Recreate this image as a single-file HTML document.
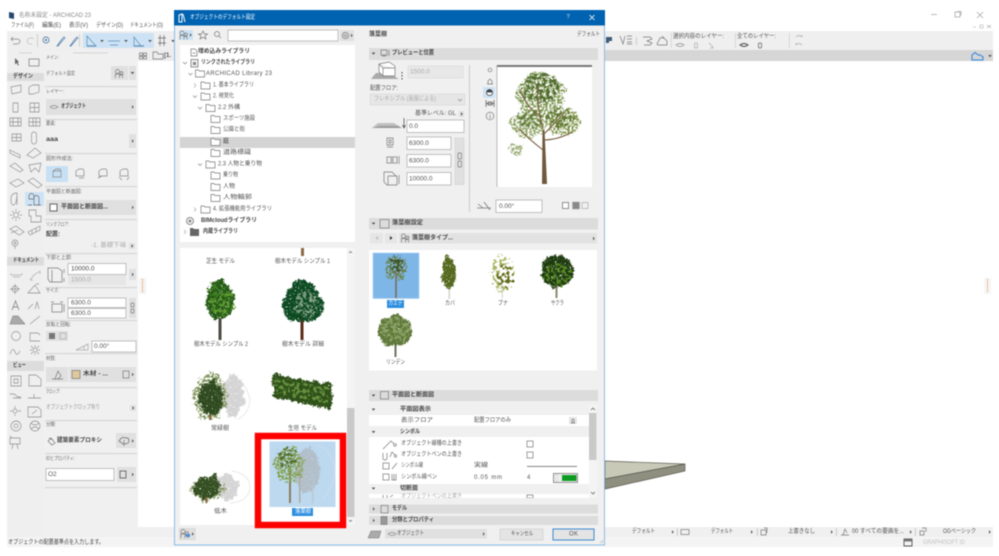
<!DOCTYPE html>
<html lang="ja"><head><meta charset="utf-8"><title>ARCHICAD 23</title>
<style>
html,body{margin:0;padding:0;background:#fff;width:999px;height:556px;overflow:hidden}
svg{display:block;filter:blur(.5px)}
text{font-family:"Liberation Sans","Noto Sans CJK JP",sans-serif;font-size:6px;fill:#555;dominant-baseline:central}
.b{font-weight:700;fill:#444}.g{fill:#aaa}.s{font-size:5px;fill:#666}.w{fill:#fff}
.l{fill:none;stroke:#777;stroke-width:.7}.lg{fill:none;stroke:#aaa;stroke-width:.7}
.i{fill:#fff;stroke:#a8a8a8;stroke-width:.7}.bar{fill:#dcdcdc}.cb{fill:#e0e0e0}.sep{fill:#d6d6d6}
</style></head><body>
<svg xmlns="http://www.w3.org/2000/svg" width="999" height="556" viewBox="0 0 999 556">
<defs>
<filter id="a" x="-30%" y="-30%" width="160%" height="160%" color-interpolation-filters="sRGB"><feTurbulence type="fractalNoise" baseFrequency=".14" numOctaves="2" seed="21" result="n0"/><feDisplacementMap in="SourceGraphic" in2="n0" scale="11" xChannelSelector="R" yChannelSelector="G" result="d0"/><feTurbulence type="fractalNoise" baseFrequency=".5" numOctaves="2" seed="4" result="n"/><feDisplacementMap in="d0" in2="n" scale="5" xChannelSelector="R" yChannelSelector="G" result="d"/><feColorMatrix in="n" type="matrix" values="0 0 0 0 0 0 0 0 0 0 0 0 0 0 0 0 0 0 9 -3.9" result="m"/><feComposite in="d" in2="m" operator="in"/></filter>
<filter id="c" x="-30%" y="-30%" width="160%" height="160%" color-interpolation-filters="sRGB"><feTurbulence type="fractalNoise" baseFrequency=".16" numOctaves="2" seed="7" result="n0"/><feDisplacementMap in="SourceGraphic" in2="n0" scale="8" xChannelSelector="R" yChannelSelector="G" result="d0"/><feTurbulence type="fractalNoise" baseFrequency=".6" numOctaves="2" seed="9" result="n"/><feDisplacementMap in="d0" in2="n" scale="4" xChannelSelector="R" yChannelSelector="G" result="d"/><feColorMatrix in="n" type="matrix" values="0 0 0 0 0 0 0 0 0 0 0 0 0 0 0 0 0 0 9 -2.2" result="m"/><feComposite in="d" in2="m" operator="in"/></filter>
<filter id="e" x="-30%" y="-30%" width="160%" height="160%" color-interpolation-filters="sRGB"><feTurbulence type="fractalNoise" baseFrequency=".3" numOctaves="2" seed="15" result="n"/><feDisplacementMap in="SourceGraphic" in2="n" scale="9" xChannelSelector="R" yChannelSelector="G" result="d"/><feColorMatrix in="n" type="matrix" values="0 0 0 0 0 0 0 0 0 0 0 0 0 0 0 0 0 0 10 -4.8" result="m"/><feComposite in="d" in2="m" operator="in"/></filter>
<path id="ar" d="M0-1.8L1.8 0 0 1.8z" fill="#555"/>
<path id="dn" d="M-1.8-1H1.8L0 1.2z" fill="#555"/>
<path id="cd" d="M-2-1L0 1 2-1" fill="none" stroke="#888" stroke-width=".7"/>
<path id="cr" d="M-1-2L1 0-1 2" fill="none" stroke="#aaa" stroke-width=".7"/>
<path id="fo" d="M.5 1H3.5L4.5 2H9.5V8H.5z" fill="#fff" stroke="#777" stroke-width=".7"/>
<path id="ey" d="M-4 0Q0-3 4 0 0 3-4 0z" fill="none" stroke="#888" stroke-width=".7"/>
<g id="tr" fill="none" stroke="#777" stroke-width=".7"><circle cx="-2" cy="-2.5" r="2"/><path d="M-4 4V0H0V4M0 1H3V4"/><circle cx="2" cy="-1" r="1.4"/></g>
</defs>

<!-- title + menu -->
<path d="M9 18V12L14 13V19z" fill="#27476f"/>
<text x="19" y="16" textLength="72" lengthAdjust="spacingAndGlyphs" style="fill:#888">名称未設定 - ARCHICAD 23</text>
<text x="11" y="26" textLength="23" lengthAdjust="spacingAndGlyphs">ファイル(F)</text>
<text x="42" y="26" textLength="19" lengthAdjust="spacingAndGlyphs">編集(E)</text>
<text x="69" y="26" textLength="19" lengthAdjust="spacingAndGlyphs">表示(V)</text>
<text x="96" y="26" textLength="27" lengthAdjust="spacingAndGlyphs">デザイン(D)</text>
<text x="130" y="26" textLength="33" lengthAdjust="spacingAndGlyphs">ドキュメント(O)</text>

<!-- window controls -->
<g fill="none" stroke="#aaa" stroke-width=".8"><path d="M931 14.5H937"/><rect x="955" y="12" width="5" height="5"/><path d="M957 11.5H961V15.5"/><path d="M977 12L983 18M983 12L977 18"/><path d="M973 27H976M980 25H983V28H980zM987 25L991 28M991 25L987 28" stroke-width=".6"/></g>

<!-- toolbar -->
<rect x="7" y="31" width="986" height="19" fill="#efefef"/>
<rect x="83" y="33" width="71" height="15" fill="#cde3f5"/>
<g fill="none" stroke="#888" stroke-width=".7">
<path d="M11 39H16Q20 39 20 41.500 20 44 16 44H13M11 39L13 37M11 39L13 41"/>
<path d="M34 39Q31 37 28 39 26 42 29 44H32" stroke="#c0c0c0"/>
<path d="M37.500 34V47" stroke="#c4c4c4"/>
<circle cx="46" cy="40" r="3" stroke="#39679a"/><circle cx="46" cy="40" r="1" fill="#39679a" stroke="none"/>
<path d="M57 46L62 39 64 37 65 38 63 40 58 46z" stroke="#4a7aa8"/><path d="M70 46L75 39 77 37 78 38 76 40 71 46z" stroke="#4a7aa8"/>
<path d="M79.500 34V47" stroke="#c4c4c4"/>
<path d="M87 46V36L96 46z" stroke="#5c8cb0"/><path d="M87 46H96" stroke="#5c8cb0" stroke-width="1.200"/>
<path d="M108 41H120M110 45H118" stroke="#5c8cb0"/>
<path d="M134 46V37L141 46z" stroke="#5c8cb0"/><path d="M134 46H144" stroke="#5c8cb0" stroke-width="1.200"/>
<path d="M158 38H166M158 43H166M160 35V46M164 35V46" stroke="#666"/>
</g>
<use href="#dn" x="102" y="41"/><use href="#dn" x="126" y="41"/><use href="#dn" x="150" y="41"/><use href="#dn" x="173" y="41"/>
<!-- right toolbar -->
<path d="M606 37H612V41H609V43H606z" fill="#3c5c78"/>
<path d="M620 36L623 44 625 36M627 36H632M627 39H632M627 42H632M627 44H632" class="l"/>
<rect x="636" y="37" width=".7" height="8" fill="#bbb"/>
<path d="M643 37H650L652 39 647 41 652 43 650 45H644" class="l"/>
<path d="M657 44L660 38H664L667 41V45H658zM662 36L664 38" class="l"/>
<rect x="671" y="33" width=".7" height="15" fill="#ccc"/>
<text x="673" y="37" textLength="51" lengthAdjust="spacingAndGlyphs">選択内容のレイヤー:</text>
<use href="#ey" x="680" y="45"/>
<g class="lg"><rect x="694.500" y="43" width="3" height="5" rx="1"/><path d="M709 43L713 47V48H710"/></g>
<rect x="735" y="33" width=".7" height="15" fill="#ccc"/>
<text x="737" y="37" textLength="39" lengthAdjust="spacingAndGlyphs">全てのレイヤー:</text>
<path d="M740 45Q744 42 748 45 744 48 740 45z" fill="none" stroke="#444" stroke-width="1"/>
<rect x="758.500" y="43" width="3" height="5" rx="1" fill="none" stroke="#666" stroke-width=".8"/>
<rect x="789" y="33" width=".7" height="15" fill="#ccc"/>
<path d="M796 37Q799 34 802 37M802 37V35M796 45Q799 42 802 45M796 45V43" class="lg"/>

<!-- tab bar -->
<rect x="138" y="50" width="855" height="11" fill="#d6d6d6"/>
<rect x="138" y="50" width="36" height="11" fill="#ededed"/>
<g class="l"><rect x="139.500" y="53" width="3" height="2.500"/><rect x="143.500" y="53" width="3" height="2.500"/><rect x="139.500" y="56.500" width="3" height="2.500"/><rect x="143.500" y="56.500" width="3" height="2.500"/><path d="M153 59V52H157L158 54H163V59z"/></g>
<text x="164" y="56" style="font-weight:700">[1.</text>
<path d="M972 59V55L975 52.500 978 55H980L983 57V60H972z" fill="none" stroke="#4a90d9" stroke-width="1.200"/>
<use href="#dn" x="990" y="56"/>

<!-- tool column & info box backgrounds -->
<rect x="7" y="50" width="37" height="487" fill="#efefef"/>
<rect x="44" y="50" width="94" height="487" fill="#f0f0f0"/>
<rect x="7" y="50" width="131" height="2" fill="#efefef"/>
<rect x="19" y="52.500" width="13" height=".8" fill="#ccc"/><rect x="73" y="52.500" width="35" height=".8" fill="#ccc"/>
<!-- canvas slab -->
<path d="M605 461L685 464 605 479z" fill="#c9c9b8" stroke="#5a5a50" stroke-width=".7"/>
<path d="M605 479L685 464V471L605 489z" fill="#8f8f80" stroke="#5a5a50" stroke-width=".7"/>
<!-- orange handles -->
<rect x="139" y="278" width="7" height="16" fill="#f3f3f3"/><path d="M142.500 279V293" stroke="#e98f45" stroke-width="1" stroke-dasharray="1 1"/>
<rect x="984" y="278" width="7" height="16" fill="#f6f6f6"/><path d="M987.500 279V293" stroke="#e98f45" stroke-width="1" stroke-dasharray="1 1"/>

<!-- tools -->
<rect x="7" y="73" width="37" height="8" fill="#dcdcdc"/><text x="13" y="77" textLength="20" lengthAdjust="spacingAndGlyphs" class="b">デザイン</text>
<rect x="7" y="257" width="37" height="8.500" fill="#dcdcdc"/><text x="13" y="261" textLength="26" lengthAdjust="spacingAndGlyphs" class="b">ドキュメント</text>
<rect x="7" y="361" width="37" height="10" fill="#dcdcdc"/><text x="13" y="366" textLength="13" lengthAdjust="spacingAndGlyphs" class="b">ビュー</text>
<rect x="25" y="192" width="19" height="14" fill="#cde3f5"/>
<path d="M15 58L19 62 17.500 62.500 19 65 18 65.500 16.500 63 15 64.500z" fill="#666"/>
<rect x="29" y="59" width="10" height="7" class="l"/>
<g fill="none" stroke="#8c8c8c" stroke-width=".65">
<path d="M11 87L21 85V92L12 94z M29 87L33 85H39V92L33 94H29z"/>
<path d="M13 103H18V112H13zM30 103H39V112H30zM30 107.500H39M34.500 103V112"/>
<path d="M10 118H21V126H10zM10 122H21M13 118V126M18 118V126M29 118H40V126H29zM33 118V126M36 118V126M29 122H40"/>
<path d="M12 134H21V141H12zM12 137.500H21M16.500 134V141"/><rect x="31.500" y="132" width="5" height="12" rx="2.500"/>
<path d="M10 150L20 155 20 158 10 153zM27 155L35 148 41 153 33 158z"/>
<path d="M10 166L15 163 23 170 20 172zM29 165L41 163 39 172 35 168 31 172z"/>
<path d="M10 183L18 179 24 183 16 187zM28 181L33 178 42 185 38 188z"/>
<path d="M11 199Q11 193 17 193 17 205 13 205 11 205 11 199zM17 193V205"/>
<path d="M29 196A2 2 0 1 1 34 196V199H29zM34 198A2 2 0 1 1 39 198V205H34V199M28 205H32M37 205H41" stroke="#666"/>
<circle cx="16" cy="215" r="2.500"/><path d="M16 209V211M16 219V221M10 215H12M20 215H22M12 211L13.500 212.500M20 211L18.500 212.500M12 219L13.500 217.500M20 219L18.500 217.500"/>
<path d="M29 210H36V216H41V222H31V216H29z"/>
<path d="M10 229L16 226 24 232 19 235zM11 233L18 230"/><path d="M28 232L40 226V230L30 235zM32 230V234M36 228V232"/>
<circle cx="15" cy="243" r="3"/><circle cx="15" cy="243" r="1"/><path d="M15 246V249"/>
<path d="M11 275H22M11 275V273M22 275V273M13 277H20" stroke="#aaa"/><path d="M30 280L34 275 40 271M30 280H33M40 271V274" stroke="#aaa"/>
<circle cx="15" cy="289" r="3"/><path d="M15 284V294M10 289H20"/><path d="M28 293L35 285 40 293zM36 284H39"/>
<path d="M12 310L15.500 301 19 310M13 307H18" stroke-width=".9"/><path d="M28 309L33 304M35 309L37 302 39 309"/>
<path d="M10 324L13 316H18L25 324z" fill="#aaa"/><path d="M30 324L40 316"/>
<circle cx="16" cy="336" r="4.500"/><path d="M30 341V333H38L40 335M30 341H40"/>
<path d="M10 354Q13 346 15 352 17 357 20 351"/><circle cx="35" cy="350" r="2"/><path d="M35 345V347M35 353V355M30 350H32M38 350H40M31 346L33 348M39 346L37 348M31 354L33 352M39 354L37 352"/>
<path d="M11 376H21V386H11zM14 379H18V383H14z"/><path d="M29 375H36L41 379V386H29z"/>
<path d="M10 394H14L18 397 21 397M13 398H21" /><path d="M28 398H41M34 394V398"/>
<circle cx="15" cy="411" r="2"/><path d="M15 406V408M15 414V416M10 411H12M18 411H21M28 417V407H38L41 410V417zM32 414L37 410" />
<circle cx="16" cy="426" r="5"/><circle cx="16" cy="426" r="2"/><circle cx="35" cy="426" r="5"/><path d="M31 423Q35 427 39 423M31 429Q35 425 39 429"/>
<path d="M10 438H20V444H10zM13 444L12 449M17 444L18 449M10 436L12 438"/>
</g>

<!-- info box separators -->
<g class="sep"><rect x="45" y="86" width="92" height="1.200"/><rect x="45" y="119" width="92" height="1.200"/><rect x="45" y="153" width="92" height="1.200"/><rect x="45" y="186" width="92" height="1.200"/><rect x="45" y="219" width="92" height="1.200"/><rect x="45" y="253" width="92" height="1.200"/><rect x="45" y="287" width="92" height="1.200"/><rect x="45" y="320" width="92" height="1.200"/><rect x="45" y="353" width="92" height="1.200"/><rect x="45" y="387" width="92" height="1.200"/><rect x="45" y="420" width="92" height="1.200"/><rect x="45" y="453" width="92" height="1.200"/><rect x="45" y="487" width="92" height="1.200"/></g>
<text class="s" x="46" y="58" textLength="13" lengthAdjust="spacingAndGlyphs">メイン:</text>
<text class="s" x="46" y="74" textLength="29" lengthAdjust="spacingAndGlyphs">デフォルト設定</text>
<rect class="cb" x="111" y="66" width="17" height="14"/><rect class="cb" x="129" y="66" width="7" height="14"/><use href="#tr" x="119.500" y="74"/><use href="#dn" x="132.500" y="73"/>
<text class="s" x="46" y="92" textLength="18" lengthAdjust="spacingAndGlyphs">レイヤー:</text>
<rect class="cb" x="46" y="99" width="90" height="16"/><use href="#ey" x="54" y="107"/><text x="61" y="107" textLength="25" lengthAdjust="spacingAndGlyphs" class="b">オブジェクト</text><use href="#ar" x="132" y="107"/>
<text class="s" x="46" y="124" textLength="10" lengthAdjust="spacingAndGlyphs">要素:</text>
<text x="46" y="140" textLength="12" lengthAdjust="spacingAndGlyphs" class="b">aaa</text>
<rect class="cb" x="129" y="134" width="7" height="14"/><use href="#ar" x="132" y="141"/>
<text class="s" x="46" y="159" textLength="27" lengthAdjust="spacingAndGlyphs">図形作成法:</text>
<rect x="46" y="166" width="22" height="16" fill="#c8e0f4"/>
<g fill="none" stroke="#888" stroke-width=".7"><path d="M53 171L56 169H60L61 171V177H53zM53 171H61"/><path d="M76 171L79 169H83L84 171V176H76zM84 178L79 178"/><path d="M99 171L102 169H106L107 171V176H99zM98 178L102 176"/><path d="M120 171L123 169H127L128 171V176H120zM119 177L122 180M129 177L127 180"/></g>
<text class="s" x="46" y="192" textLength="36" lengthAdjust="spacingAndGlyphs">平面図と断面図:</text>
<rect class="cb" x="46" y="200" width="90" height="15"/><rect x="50" y="204" width="7" height="7" style="stroke:#555;stroke-width:.9;fill:#fff"/><text x="61" y="207.500" textLength="47" lengthAdjust="spacingAndGlyphs" class="b">平面図と断面図...</text><use href="#ar" x="132" y="207.500"/>
<text class="s" x="46" y="225" textLength="23" lengthAdjust="spacingAndGlyphs">リンクフロア:</text>
<text x="46" y="235" textLength="14" lengthAdjust="spacingAndGlyphs" class="b">配置:</text>
<text class="g" x="91" y="246" textLength="35" lengthAdjust="spacingAndGlyphs">-1. 基礎下端</text><rect class="cb" x="129" y="243" width="6" height="6"/><use href="#ar" x="131.500" y="246"/>
<text class="s" x="46" y="258" textLength="26" lengthAdjust="spacingAndGlyphs">下部と上部:</text>
<path d="M48 272V268H58L62 271V282H50L48 279zM52 270V282M64 269V273M64 278V282" class="l"/>
<rect class="i" x="68" y="263.500" width="58" height="11"/><text x="71" y="269" style="fill:#444;font-size:6.500px">10000.0</text>
<rect x="68" y="275" width="58" height="10" fill="#e6e6e6"/><text x="71" y="280" class="g" style="font-size:6.500px">1500.0</text>
<rect class="cb" x="129" y="269" width="7" height="11"/><use href="#ar" x="132" y="274.500"/>
<text class="s" x="46" y="291" textLength="13" lengthAdjust="spacingAndGlyphs">サイズ:</text>
<g class="l"><rect x="52" y="304" width="10" height="8"/><path d="M51 302H54M60 302H63M64 304V312"/></g>
<rect class="i" x="68" y="298" width="58" height="9.500"/><text x="71" y="303" style="font-size:6.500px">6300.0</text>
<rect class="i" x="68" y="308.500" width="58" height="9.500"/><text x="71" y="313.500" style="font-size:6.500px">6300.0</text>
<rect class="cb" x="129" y="298" width="7" height="20"/><rect x="131" y="303" width="3" height="4" rx="1" class="l"/><rect x="131" y="309" width="3" height="4" rx="1" class="l"/>
<text class="s" x="46" y="325" textLength="25" lengthAdjust="spacingAndGlyphs">反転と回転:</text>
<rect class="cb" x="46" y="331" width="22" height="10"/><rect x="49" y="333" width="6" height="6" fill="#777"/><rect x="60" y="333" width="6" height="6" class="lg"/>
<path d="M76 350L88 344V350zM84 346V350" class="lg"/>
<rect class="i" x="92" y="341" width="44" height="11"/><text x="94" y="346.500" style="font-size:6.500px">0.00°</text>
<text class="s" x="46" y="359" textLength="10" lengthAdjust="spacingAndGlyphs">材質:</text>
<rect class="cb" x="46" y="367" width="22" height="15"/><rect class="cb" x="69" y="367" width="67" height="15"/>
<path d="M52 379H63M55 379L58 371 61 376 58 379" class="l"/><rect x="72" y="370.500" width="8" height="8" fill="#dfc99a" stroke="#777" stroke-width=".7"/><text x="83" y="374.500" textLength="25" lengthAdjust="spacingAndGlyphs" class="b">木材 - ...</text><rect x="123" y="371" width="6" height="7" class="l"/><use href="#ar" x="132" y="374.500"/>
<text class="s" x="46" y="392" textLength="14" lengthAdjust="spacingAndGlyphs">クロップ:</text>
<text x="46" y="408" textLength="54" lengthAdjust="spacingAndGlyphs" style="fill:#999">オブジェクトクロップ有り</text><rect class="cb" x="130" y="405" width="6" height="6"/><use href="#ar" x="132.500" y="408"/>
<text class="s" x="46" y="425" textLength="10" lengthAdjust="spacingAndGlyphs">分類:</text>
<path d="M48 441L51 438 55 443 52 445zM49 438L53 440" class="l"/><text x="57" y="441" textLength="45" lengthAdjust="spacingAndGlyphs" class="b">建築要素プロキシ</text>
<rect class="cb" x="116" y="433" width="20" height="15"/><path d="M119 441Q122 436 125 438 129 437 129 441 129 444 123 444z" fill="none" stroke="#777" stroke-width=".8"/><path d="M124 440V446" stroke="#777" stroke-width=".7"/><use href="#ar" x="132" y="441"/>
<text class="s" x="46" y="459" textLength="29" lengthAdjust="spacingAndGlyphs">IDとプロパティ:</text>
<rect class="i" x="46" y="468.500" width="68" height="12"/><text x="48" y="474.500" style="font-size:6.500px">O2</text>
<rect class="cb" x="117" y="467" width="19" height="15"/><rect x="120" y="471" width="6" height="7" fill="none" stroke="#555" stroke-width=".8"/><use href="#ar" x="132" y="474.500"/>
<!-- zoom buttons -->
<g class="lg"><circle cx="143" cy="531" r="3"/><circle cx="155" cy="531" r="3"/></g><circle cx="167" cy="531" r="3" fill="none" stroke="#777"/><path d="M169 533L171 536M145 533L147 536M157 533L159 536" stroke="#aaa"/>

<!-- bottom bars -->
<rect x="138" y="527" width="855" height="10" fill="#f0f0f0"/>
<rect x="7" y="537" width="986" height="10" fill="#f4f4f4"/>
<text x="8" y="543" textLength="96" lengthAdjust="spacingAndGlyphs" style="fill:#444">オブジェクトの配置基準点を入力します。</text>
<text x="632" y="532" textLength="23" lengthAdjust="spacingAndGlyphs">デフォルト</text><use href="#ar" x="672" y="532"/><rect x="677" y="528" width=".7" height="8" fill="#bbb"/>
<rect x="681" y="529.500" width="8" height="5" class="l"/>
<text x="711" y="532" textLength="22" lengthAdjust="spacingAndGlyphs">デフォルト</text><use href="#ar" x="751" y="532"/><rect x="757" y="528" width=".7" height="8" fill="#bbb"/>
<path d="M761 530H766V535H761zM764 528H767V533" class="l"/>
<text x="788" y="532" textLength="27" lengthAdjust="spacingAndGlyphs">上書きなし</text><use href="#ar" x="831" y="532"/><rect x="836" y="528" width=".7" height="8" fill="#bbb"/>
<path d="M841 535H849M843 535L845 529 847 533" class="l"/>
<text x="852" y="532" textLength="52" lengthAdjust="spacingAndGlyphs">00 すべての要画を...</text><use href="#ar" x="910" y="532"/><rect x="915" y="528" width=".7" height="8" fill="#bbb"/>
<path d="M920 531H924V535H920zM922 528H926V532" class="l"/>
<text x="943" y="532" textLength="33" lengthAdjust="spacingAndGlyphs">OGベーシック</text><use href="#ar" x="989" y="532"/>
<path d="M904 539H912V546H904z" fill="none" stroke="#555" stroke-width=".9"/><rect x="904" y="539" width="8" height="2.500" fill="#777"/>
<text x="923" y="543" textLength="42" lengthAdjust="spacingAndGlyphs" style="fill:#c0c0c0">GRAPHISOFT ID</text>

<!-- DIALOG -->
<rect x="174.500" y="10.500" width="430" height="534.500" fill="#f0f0f0" stroke="#8cbbe6"/>
<rect x="174" y="10" width="431" height="15.500" fill="#0063b1"/>
<path d="M179 22V15L182 14V22zM183 14L185 22" stroke="#fff" stroke-width="1" fill="none"/>
<text x="190" y="18" textLength="65" lengthAdjust="spacingAndGlyphs" class="w">オブジェクトのデフォルト設定</text>
<text x="566.500" y="17.500" style="fill:#cfe0f0">?</text>
<path d="M589.500 15L594.500 20M594.500 15L589.500 20" stroke="#fff" stroke-width=".8"/>

<!-- left pane toolbar -->
<rect x="179" y="30" width="14" height="10" fill="#cde3f5"/><use href="#tr" x="184" y="35.500"/><use href="#ar" x="190" y="35"/>
<path d="M203 31L204.500 34H207.500L205 36 206 39 203 37.200 200 39 201 36 198.500 34H201.500z" class="l"/>
<circle cx="217" cy="34" r="2.500" class="l"/><path d="M219 36L221 38" class="l"/>
<rect class="i" x="228" y="30" width="110" height="11"/>
<rect class="cb" x="340" y="30" width="14" height="11"/><circle cx="345.500" cy="35.500" r="3" fill="none" stroke="#777" stroke-width="1.200" stroke-dasharray="1.200 .6"/><circle cx="345.500" cy="35.500" r="1" fill="none" stroke="#777" stroke-width=".6"/><use href="#ar" x="351" y="35.500"/>

<!-- tree pane -->
<rect x="180" y="45" width="175" height="197" fill="#fff"/>
<rect x="180" y="137" width="175" height="11" fill="#d4d4d4"/>
<path d="M191 49H195L197 51V56H191zM192.500 53H195.500" class="l"/>
<text x="198" y="52" textLength="52" lengthAdjust="spacingAndGlyphs" class="b">埋め込みライブラリ</text>
<use href="#cd" x="185" y="63"/><rect x="191" y="59.500" width="7" height="7.500" fill="#f2f2f2" stroke="#666" stroke-width=".7"/><rect x="193" y="62" width="3" height="3" fill="#888"/>
<text x="201" y="63" textLength="54" lengthAdjust="spacingAndGlyphs" class="b">リンクされたライブラリ</text>
<use href="#cd" x="190.500" y="74"/><use href="#fo" x="195" y="69"/>
<text x="206" y="74" textLength="66">ARCHICAD Library 23</text>
<use href="#cr" x="195" y="85.500"/><use href="#fo" x="200.500" y="81"/>
<text x="213" y="85.500" textLength="41" lengthAdjust="spacingAndGlyphs">1. 基本ライブラリ</text>
<use href="#cd" x="195" y="96.500"/><use href="#fo" x="200.500" y="92"/>
<text x="213" y="96.500" textLength="21" lengthAdjust="spacingAndGlyphs">2. 視覚化</text>
<use href="#cd" x="200" y="108"/><use href="#fo" x="205.500" y="103.500"/>
<text x="218" y="108" textLength="22" lengthAdjust="spacingAndGlyphs">2.2 外構</text>
<use href="#fo" x="210.500" y="114.500"/><text x="223" y="119" textLength="32" lengthAdjust="spacingAndGlyphs">スポーツ施設</text>
<use href="#fo" x="210.500" y="125.500"/><text x="223" y="130" textLength="22" lengthAdjust="spacingAndGlyphs">公園と街</text>
<use href="#fo" x="210.500" y="137.500"/><text x="223" y="142" textLength="6" lengthAdjust="spacingAndGlyphs" style="fill:#333">庭</text>
<use href="#fo" x="210.500" y="148.500"/><text x="223" y="153" textLength="28" lengthAdjust="spacingAndGlyphs">道路標識</text>
<use href="#cd" x="200" y="164.500"/><use href="#fo" x="205.500" y="160"/>
<text x="218" y="164.500" textLength="44" lengthAdjust="spacingAndGlyphs">2.3 人物と乗り物</text>
<use href="#fo" x="210.500" y="171"/><text x="223" y="175.500" textLength="15" lengthAdjust="spacingAndGlyphs">乗り物</text>
<use href="#fo" x="210.500" y="182.500"/><text x="223" y="187" textLength="12" lengthAdjust="spacingAndGlyphs">人物</text>
<use href="#fo" x="210.500" y="193.500"/><text x="223" y="198" textLength="29" lengthAdjust="spacingAndGlyphs">人物輪郭</text>
<use href="#cr" x="195" y="209.500"/><use href="#fo" x="200.500" y="205"/>
<text x="213" y="209.500" textLength="59" lengthAdjust="spacingAndGlyphs">4. 拡張機能用ライブラリ</text>
<circle cx="190" cy="221" r="3.500" fill="#eee" stroke="#666" stroke-width=".7"/><circle cx="190" cy="221" r="1.300" fill="#777"/>
<text x="201" y="221" textLength="56" lengthAdjust="spacingAndGlyphs" class="b">BIMcloudライブラリ</text>
<use href="#cr" x="185" y="232"/><path d="M190 228H193L194 229H199V236H190z" fill="#666"/>
<text x="203" y="232" textLength="35" lengthAdjust="spacingAndGlyphs" class="b">内蔵ライブラリ</text>

<!-- thumbnails pane -->
<rect x="180" y="248" width="175" height="277" fill="#fff"/>
<rect x="347" y="248" width="8" height="277" fill="#f4f4f4"/><rect x="347" y="408" width="7.500" height="109" fill="#c9c9c9"/>
<path d="M349 253L350.500 251.500 352 253M349 520L350.500 521.500 352 520" fill="none" stroke="#666" stroke-width=".7"/>
<rect x="301" y="248" width="3" height="8" fill="#8b6a45"/>
<text x="206" y="262" textLength="29" lengthAdjust="spacingAndGlyphs">芝生 モデル</text>
<text x="275" y="262" textLength="55" lengthAdjust="spacingAndGlyphs">樹木モデル シンプル 1</text>
<!-- tree simple 2 -->
<rect x="218.500" y="318" width="3" height="22" fill="#4c4a42"/>
<g filter="url(#c)"><path d="M220 279Q230 282 233 296 237 312 226 318H213Q203 312 207 296 210 282 220 279z" fill="#245a14"/></g>
<g filter="url(#e)"><ellipse cx="222" cy="303" rx="13" ry="13" fill="#5f9d30"/><ellipse cx="215" cy="290" rx="8" ry="7" fill="#3f8024"/></g>
<text x="194" y="345" textLength="54" lengthAdjust="spacingAndGlyphs">樹木モデル シンプル 2</text>
<!-- tree detail -->
<rect x="300.500" y="315" width="3" height="25" fill="#5a2e18"/>
<g filter="url(#c)"><path d="M302 279Q316 284 322 300 327 314 312 321H291Q279 314 283 300 289 284 302 279z" fill="#0d4a22"/></g>
<g filter="url(#e)" opacity=".55"><ellipse cx="306" cy="304" rx="12" ry="13" fill="#cfd8c4"/></g>
<text x="282" y="345" textLength="42" lengthAdjust="spacingAndGlyphs">樹木モデル 詳細</text>
<!-- evergreen -->
<g filter="url(#c)" opacity=".5"><ellipse cx="233" cy="396" rx="11" ry="21" fill="#aaa"/></g>
<path d="M229 374Q246 380 250 400 248 415 238 419" fill="none" stroke="#d4d4d4" stroke-width="1" stroke-dasharray="1 1"/>
<g filter="url(#a)"><ellipse cx="210" cy="396" rx="17" ry="23" fill="#7a9054"/></g>
<g filter="url(#c)"><ellipse cx="211" cy="398" rx="12" ry="18" fill="#2f4a20"/></g>
<rect x="209" y="415" width="2.500" height="5" fill="#8b6a45"/>
<text x="211" y="429" textLength="18" lengthAdjust="spacingAndGlyphs">常緑樹</text>
<!-- hedge -->
<path d="M273 375L331 387 330 408 275 395z" fill="#38591f"/>
<g filter="url(#c)"><path d="M272 373L332 385 331 410 274 397z" fill="#2e5019"/></g>
<g filter="url(#e)"><path d="M274 377L329 388 329 405 276 393z" fill="#66903f"/></g>
<text x="288" y="429" textLength="29" lengthAdjust="spacingAndGlyphs">生垣 モデル</text>
<!-- shrub -->
<g filter="url(#c)" opacity=".5"><ellipse cx="227" cy="487" rx="12" ry="13" fill="#aaa"/></g>
<path d="M232 471Q250 474 250 488 248 502 230 503" fill="none" stroke="#d4d4d4" stroke-width="1" stroke-dasharray="1 1"/>
<g filter="url(#a)"><ellipse cx="206" cy="490" rx="16" ry="11" fill="#7a8f52"/></g>
<g filter="url(#c)"><path d="M194 484Q200 477 208 476L216 475Q220 484 219 494L206 500Q198 497 195 494z" fill="#344f22"/></g>
<rect x="205.500" y="497" width="2" height="6" fill="#8a6a46"/>
<text x="214" y="512" textLength="13" lengthAdjust="spacingAndGlyphs">低木</text>
<!-- red box -->
<rect x="258" y="436" width="85" height="89" fill="#fff" stroke="#ff0000" stroke-width="6.500"/>
<rect x="269.500" y="441.500" width="66" height="65.500" fill="#bcd9f0"/>
<g filter="url(#c)" opacity=".55"><ellipse cx="307" cy="470" rx="13" ry="22" fill="#aaa"/></g>
<path d="M316 445Q334 450 335 472 330 495 322 500" fill="none" stroke="#dde" stroke-width="1" stroke-dasharray="1 1"/>
<rect x="299" y="470" width="1.500" height="33" fill="#b0aca0"/><rect x="312" y="485" width="1.300" height="18" fill="#c4c4c4"/>
<rect x="289" y="470" width="2" height="33" fill="#8f7b60"/>
<g filter="url(#a)"><ellipse cx="289" cy="465" rx="15" ry="17" fill="#83a04a"/></g>
<g filter="url(#e)"><ellipse cx="287" cy="458" rx="11" ry="11" fill="#55702c"/></g>
<rect x="292" y="508" width="21" height="8" fill="#2d8fe0"/>
<text x="295" y="512" textLength="16" lengthAdjust="spacingAndGlyphs" class="w">落葉樹</text>
<rect x="179.500" y="528.500" width="15.500" height="11" fill="#e0e0e0" stroke="#ccc" stroke-width=".6"/><use href="#tr" x="185" y="534"/><rect x="186" y="534" width="4" height="3" fill="#4a90d9"/><use href="#ar" x="192" y="534"/>

<!-- right pane -->
<text x="369" y="35" textLength="18" lengthAdjust="spacingAndGlyphs" class="b">落葉樹</text>
<text x="577" y="35" textLength="23" lengthAdjust="spacingAndGlyphs">デフォルト</text>
<rect class="bar" x="369" y="48" width="229" height="12"/>
<use href="#dn" x="373.500" y="53.500"/><path d="M381 50H387V55H381zM382 56H386M389 50V56" class="l"/>
<text x="392" y="53.500" textLength="42" lengthAdjust="spacingAndGlyphs" class="b">プレビューと位置</text>
<path d="M371 79L376 73H388L399 79z" fill="#aaa"/><path d="M379 64L389 62 395 66V76H383L379 72zM379 64L383 68H395M383 68V76" fill="#fff" stroke="#777" stroke-width=".7"/><path d="M402 72V80" stroke="#444" stroke-dasharray="1.500 1.500"/>
<rect x="408" y="66" width="55" height="12" fill="#e8e8e8" stroke="#d8d8d8" stroke-width=".6"/><text x="410" y="72" class="g" style="font-size:6.500px">1500.0</text>
<text x="370" y="89" textLength="28" lengthAdjust="spacingAndGlyphs">配置フロア:</text>
<rect x="370" y="94" width="95" height="11" fill="#e6e6e6" stroke="#d8d8d8" stroke-width=".6"/><text x="374" y="99.500" textLength="62" lengthAdjust="spacingAndGlyphs" class="g">フレキシブル (高度による)</text><use href="#cd" x="460" y="100"/>
<text x="415" y="114" textLength="41" lengthAdjust="spacingAndGlyphs">基準レベル: GL</text><rect class="cb" x="459" y="111" width="5" height="6"/><use href="#ar" x="461" y="114"/>
<path d="M372 128L378 123H394L402 128z" fill="#c0c0c0"/><path d="M372 128L380 126H398L402 128z" fill="#999"/><path d="M404 118V127M402.500 125L404 128 405.500 125" stroke="#444" stroke-width=".7" fill="none"/>
<rect class="i" x="407" y="120" width="57" height="12.500"/><text x="409" y="126.500" style="font-size:6.500px">0.0</text>
<rect class="i" x="407" y="137" width="44" height="12.500"/><text x="409" y="143.500" style="font-size:6.500px">6300.0</text>
<rect class="i" x="407" y="154.500" width="44" height="12.500"/><text x="409" y="161" style="font-size:6.500px">6300.0</text>
<rect class="i" x="407" y="172.500" width="44" height="12.500"/><text x="409" y="179" style="font-size:6.500px">10000.0</text>
<rect class="cb" x="455" y="138" width="9" height="46.500" stroke="#ccc" stroke-width=".5"/><rect x="458" y="153" width="3.500" height="6" rx="1" class="l"/><rect x="458" y="161" width="3.500" height="6" rx="1" class="l"/>
<path d="M387 138H393V145H387zM389 140H391V143H389zM387 147H393" class="l"/>
<path d="M387 157H397V163H387zM399 156V164M391 158.500H393V161.500H391z" class="l"/>
<path d="M384 172H392L397 177V185H387L384 182zM388 176H397M388 176V185M399 175V184" class="l"/>
<rect x="469" y="65" width=".9" height="147" fill="#c8c8c8"/>
<!-- preview -->
<rect x="497" y="65" width="95" height="122" fill="#fff"/><rect x="497" y="65" width="95" height="2" fill="#777"/><rect x="496.500" y="65" width=".8" height="122" fill="#aaa"/>
<rect x="483" y="87" width="12" height="11" fill="#cde3f5"/>
<circle cx="490" cy="70" r="1.800" class="l"/>
<path d="M487 84H493M488 84V81L490 79 492 81V84" class="l"/>
<circle cx="489.500" cy="92.500" r="3" fill="#fff" stroke="#333" stroke-width=".7"/><path d="M486.500 92.500A3 3 0 0 1 492.500 92.500z" fill="#444"/>
<path d="M486 100V107M494 100V107M488 102H492V105H488zM486 103.500H494" stroke="#555" stroke-width=".7" fill="none"/>
<circle cx="490" cy="116" r="3.800" class="l"/><path d="M490 115V118.500M490 113.500V114" class="l"/>
<!-- big tree -->
<g filter="url(#a)"><ellipse cx="541" cy="95" rx="24" ry="22" fill="#7d9650"/><ellipse cx="528" cy="124" rx="19" ry="13" fill="#93a76a"/><ellipse cx="564" cy="122" rx="17" ry="13" fill="#84994f"/><ellipse cx="516" cy="149" rx="8" ry="5" fill="#9aac74"/></g>
<g filter="url(#e)"><ellipse cx="541" cy="88" rx="18" ry="15" fill="#4f6a30"/><ellipse cx="560" cy="118" rx="14" ry="10" fill="#5c7634"/><ellipse cx="530" cy="120" rx="13" ry="9" fill="#607a38"/></g>
<path d="M543 150Q530 140 518 128M543 135Q556 122 565 112M543 128Q536 105 538 85M541 118Q525 105 520 90M543 140Q558 140 572 132" fill="none" stroke="#7a5f40" stroke-width="1.100"/><path d="M542 184L547 184 544.500 130 542.500 130z" fill="#70583b"/>
<path d="M477 208H491M478 204L483 208M484 202L490 210" stroke="#777" stroke-width=".8" fill="none"/>
<rect class="i" x="496" y="200" width="46" height="12.500"/><text x="499" y="206.500" style="font-size:6.500px">0.00°</text>
<rect x="562.500" y="202.500" width="6" height="6" fill="#fff" stroke="#666" stroke-width=".7"/>
<rect x="572.500" y="202" width="7" height="7" fill="#888" stroke="#aaa" stroke-width=".6"/><rect x="582" y="202.500" width="6" height="6" class="lg"/>

<rect class="bar" x="369" y="218" width="229" height="11.500"/>
<use href="#dn" x="373.500" y="223.500"/><rect x="380" y="219.500" width="9" height="8.500" class="l"/>
<text x="392" y="223.500" textLength="31" lengthAdjust="spacingAndGlyphs" class="b">落葉樹設定</text>
<rect x="370" y="233" width="13" height="10.500" fill="#e6e6e6"/><rect x="385" y="233" width="12" height="10.500" fill="#e6e6e6"/><rect x="399" y="233" width="198" height="10.500" fill="#e2e2e2"/>
<path d="M378 236V240L375.500 238z" fill="#bbb"/><path d="M390 236V240L392.500 238z" fill="#333"/><use href="#tr" x="405.500" y="238.500"/>
<text x="412" y="238.500" textLength="41" lengthAdjust="spacingAndGlyphs" class="b">落葉樹タイプ...</text><use href="#ar" x="593" y="238.500"/>
<rect x="369" y="250" width="228" height="120.500" fill="#fff"/>
<!-- type thumbs -->
<rect x="373" y="253" width="46" height="45.500" fill="#7fb6e8" stroke="#a8d0f4" stroke-width=".7"/>
<g filter="url(#a)"><ellipse cx="396" cy="268" rx="11" ry="12" fill="#6b8244"/></g>
<g filter="url(#e)"><ellipse cx="396" cy="264" rx="8" ry="8" fill="#3d5528"/></g>
<rect x="395" y="270" width="2" height="28" fill="#767a75"/>
<rect x="387" y="300" width="17" height="8" fill="#2d8fe0"/><text x="388.500" y="304" textLength="14" lengthAdjust="spacingAndGlyphs" class="w">カエデ</text>
<!-- kaba -->
<rect x="448.500" y="285" width="1.500" height="14" fill="#d4d4c8"/>
<g filter="url(#c)"><path d="M449 256Q455 260 456 272 457 284 449 291 441 284 442 272 443 260 449 256z" fill="#55691f"/></g>
<text x="445" y="304" textLength="10" lengthAdjust="spacingAndGlyphs">カバ</text>
<!-- buna -->
<rect x="501.500" y="283" width="1.500" height="15" fill="#ddd"/>
<g filter="url(#e)"><ellipse cx="502" cy="273" rx="12" ry="18" fill="#a8b460"/></g>
<g filter="url(#e)"><ellipse cx="505" cy="277" rx="8" ry="11" fill="#626c1e"/></g>
<text x="498" y="304" textLength="10" lengthAdjust="spacingAndGlyphs">ブナ</text>
<!-- sakura -->
<rect x="555.500" y="283" width="2" height="15" fill="#8a8a6a"/>
<g filter="url(#c)"><ellipse cx="557" cy="271" rx="17" ry="16" fill="#1d3b0e"/></g>
<g filter="url(#e)"><ellipse cx="558" cy="275" rx="14" ry="11" fill="#5a8a26"/></g>
<text x="551" y="304" textLength="13" lengthAdjust="spacingAndGlyphs">サクラ</text>
<!-- linden -->
<rect x="394.500" y="340" width="2" height="17" fill="#6f6f62"/>
<g filter="url(#c)"><ellipse cx="395" cy="331" rx="17" ry="15" fill="#5f7839"/></g>
<g filter="url(#e)"><ellipse cx="395" cy="329" rx="15" ry="13" fill="#8aa164"/></g>
<text x="386" y="363" textLength="19" lengthAdjust="spacingAndGlyphs">リンデン</text>

<!-- section 3 -->
<rect class="bar" x="369" y="390" width="229" height="11"/>
<use href="#dn" x="373.500" y="395.500"/><rect x="380.500" y="391.500" width="8" height="7.500" class="l"/>
<text x="392" y="395.500" textLength="42" lengthAdjust="spacingAndGlyphs" class="b">平面図と断面図</text>
<rect x="369" y="405" width="220" height="93" fill="#fff"/>
<rect x="369" y="405" width="220" height="10" fill="#f0f0f0"/><rect x="369" y="426" width="220" height="11" fill="#f0f0f0"/><rect x="369" y="484" width="220" height="10" fill="#f0f0f0"/>
<rect x="589" y="405" width="8" height="93" fill="#f4f4f4"/><rect x="589" y="413" width="7.500" height="47" fill="#c9c9c9"/>
<path d="M591 410L593 408 595 410M591 492L593 494 595 492" fill="none" stroke="#555" stroke-width=".7"/>
<use href="#dn" x="373.500" y="409.500"/><text x="400" y="410" textLength="31" lengthAdjust="spacingAndGlyphs" class="b">平面図表示</text>
<text x="401" y="421" textLength="32" lengthAdjust="spacingAndGlyphs">表示フロア</text><text x="474" y="421" textLength="37" lengthAdjust="spacingAndGlyphs">配置フロアのみ</text>
<rect x="569" y="417" width="8" height="7" fill="#e4e4e4"/><path d="M571 423H575M572 423V420L573 419 574 420V423" class="l"/>
<use href="#dn" x="373.500" y="432"/><text x="400" y="432.500" textLength="20" lengthAdjust="spacingAndGlyphs" class="b">シンボル</text>
<path d="M383 449L391 441 394 444" class="l"/><circle cx="395" cy="445" r="1.300" class="l"/>
<text x="401" y="444" textLength="61" lengthAdjust="spacingAndGlyphs">オブジェクト線種の上書き</text><rect x="527" y="441" width="6" height="6" fill="#fff" stroke="#777" stroke-width=".7"/>
<path d="M383 453V459M387 453V459M383 459Q385 461 387 459M390 457L392 452 395 455" class="l"/><circle cx="395.500" cy="456" r="1.200" class="l"/>
<text x="401" y="455" textLength="61" lengthAdjust="spacingAndGlyphs">オブジェクトペンの上書き</text><rect x="527" y="452" width="6" height="6" fill="#fff" stroke="#777" stroke-width=".7"/>
<rect x="383" y="463" width="6" height="6" fill="#fff" stroke="#777" stroke-width=".7"/><path d="M392 469L397 463" class="l"/>
<text x="401" y="466" textLength="22" lengthAdjust="spacingAndGlyphs">シンボル線</text><text x="474" y="466" textLength="14" lengthAdjust="spacingAndGlyphs">実線</text><rect x="527" y="466" width="50" height=".8" fill="#666"/>
<rect x="383" y="474" width="6" height="6" fill="#fff" stroke="#777" stroke-width=".7"/><path d="M392 474V480H396V474M394 474V480" class="l"/>
<text x="401" y="477.500" textLength="36" lengthAdjust="spacingAndGlyphs">シンボル線ペン</text><text x="474" y="478" textLength="28">0.05 mm</text><text x="527" y="478">4</text>
<rect x="553.500" y="473.500" width="24" height="9" fill="#eee" stroke="#777" stroke-width=".8"/><rect x="556" y="475" width="1.500" height="6" fill="#fff" stroke="#999" stroke-width=".3"/><rect x="562" y="475" width="14.500" height="6" fill="#0e9b22"/>
<use href="#dn" x="373.500" y="488.500"/><text x="400" y="489" textLength="18" lengthAdjust="spacingAndGlyphs" class="b">切断面</text>
<path d="M383 495V498M387 495V498M390 497L393 495" class="l"/><text x="401" y="497" textLength="61" lengthAdjust="spacingAndGlyphs" style="fill:#aaa">オブジェクトペンの上書き</text><rect x="527" y="495" width="6" height="3" class="l"/>
<rect x="369" y="498" width="229" height="6" fill="#f0f0f0"/>
<rect class="bar" x="369" y="504.500" width="229" height="9"/><use href="#ar" x="373" y="509"/><rect x="381" y="505.500" width="7" height="7.500" class="l"/><text x="392" y="509" textLength="15" lengthAdjust="spacingAndGlyphs" class="b">モデル</text>
<rect class="bar" x="369" y="516" width="229" height="9"/><use href="#ar" x="373" y="520.500"/><rect x="381" y="516.500" width="6" height="8" fill="#999" stroke="#666" stroke-width=".5"/><text x="392" y="520.500" textLength="42" lengthAdjust="spacingAndGlyphs" class="b">分類とプロパティ</text>
<path d="M368 538L371 531H381L379 538z" fill="#aaa" stroke="#777" stroke-width=".5"/>
<rect class="cb" x="385" y="529" width="102" height="9.500"/><use href="#ey" x="392" y="534"/><text x="397" y="534" textLength="27" lengthAdjust="spacingAndGlyphs">オブジェクト</text><use href="#ar" x="483" y="534"/>
<rect x="500" y="529" width="43" height="11" fill="#e4e4e4" stroke="#ccc" stroke-width=".6"/><text x="511" y="534.500" textLength="22" lengthAdjust="spacingAndGlyphs">キャンセル</text>
<rect x="553" y="529" width="41" height="11" fill="#e4e4e4" stroke="#3a8ad0" stroke-width="1"/><text x="569" y="534.500" textLength="9">OK</text>
<path d="M600 543L603 540M602 543L603 542" stroke="#bbb" stroke-width=".6"/>
</svg>
</body></html>
